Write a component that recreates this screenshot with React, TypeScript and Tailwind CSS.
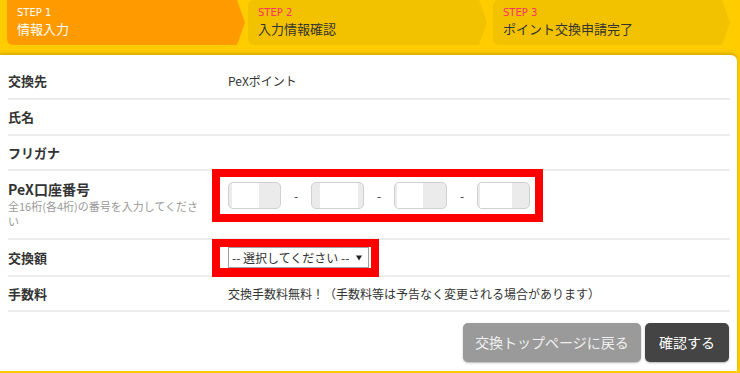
import React from "react";

const font = { fontFamily: "'Noto Sans CJK JP', 'Noto Sans', sans-serif" };

function Step({ n, title, active, w, cls }: { n: number; title: string; active?: boolean; w: string; cls?: string }) {
  return (
    <div
      className={`${w} ${cls ?? ""} h-[45px] rounded-bl-[6px] pl-[10px] flex flex-col justify-center [clip-path:polygon(0_0,calc(100%_-_8px)_0,100%_50%,calc(100%_-_8px)_100%,0_100%)] ${
        active ? "bg-[#ff9a00]" : "bg-[#f2c200]"
      }`}
    >
      <div className={`text-[10px] leading-[12px] ${active ? "text-white" : "text-[#ff3366]"}`} style={{ fontFamily: "'DejaVu Sans', sans-serif" }}>
        STEP {n}
      </div>
      <div className={`text-[13px] leading-[18px] mt-[1px] ${active ? "text-white" : "text-[#333]"}`}>{title}</div>
    </div>
  );
}

function NumBox({ white, ml }: { white: string; ml: string }) {
  return (
    <div className="w-[53px] h-[27px] rounded-[5px] border border-[#d0d0d0] bg-[#ebebeb] flex overflow-hidden">
      <div className={`${ml} ${white} h-full bg-white`} />
    </div>
  );
}

export default function App() {
  return (
    <div className="w-[740px] h-[373px] overflow-hidden bg-[#ffcc00] text-[#333]" style={font}>
      <div className="flex pl-[7px]">
        <Step n={1} title="情報入力" active w="w-[238px]" />
        <Step n={2} title="入力情報確認" w="w-[239px]" cls="ml-[3px] rounded-l-[6px]" />
        <Step n={3} title="ポイント交換申請完了" w="w-[237px]" cls="ml-[6px] rounded-l-[6px]" />
      </div>
      <div className="mt-[10px] w-[737px] h-[316px] bg-white rounded-tr-[6px] pt-[9px] pl-[8px] pr-[7px] shadow-[0_-2px_3px_rgba(180,140,0,0.5)]">
        <div className="h-[36px] border-b-2 border-[#ededed] flex items-center">
          <div className="w-[220px] text-[13px] font-bold">交換先</div>
          <div className="text-[12px]">PeXポイント</div>
        </div>
        <div className="h-[36px] border-b-2 border-[#ededed] flex items-center">
          <div className="w-[220px] text-[13px] font-bold">氏名</div>
        </div>
        <div className="h-[35px] border-b-2 border-[#ededed] flex items-center">
          <div className="w-[220px] text-[13px] font-bold">フリガナ</div>
        </div>
        <div className="h-[69px] border-b-2 border-[#ededed] flex items-start">
          <div className="w-[204px] pt-[8px]">
            <div className="text-[14px] leading-[20px] font-bold">PeX口座番号</div>
            <div className="text-[11px] leading-[15px] text-[#9a9a9a]">
              全16桁(各4桁)の番号を入力してくださ
              <br />い
            </div>
          </div>
          <div className="-mt-[2px] border-[8px] border-[#ff0000] pl-[8px] pr-[0px] py-[5px] flex items-center w-[331px] h-[53px]">
            <NumBox white="w-[27px]" ml="ml-[3px]" />
            <div className="w-[30px] text-center text-[12px]">-</div>
            <NumBox white="w-[38px]" ml="ml-[8px]" />
            <div className="w-[30px] text-center text-[12px]">-</div>
            <NumBox white="w-[26px]" ml="ml-[2px]" />
            <div className="w-[30px] text-center text-[12px]">-</div>
            <NumBox white="w-[32px]" ml="ml-[2px]" />
          </div>
        </div>
        <div className="h-[37px] border-b-2 border-[#ededed] flex items-start">
          <div className="w-[204px] h-full flex items-center text-[13px] font-bold">交換額</div>
          <div className="-mt-[1px] h-[38px] w-[167px] border-t-[8px] border-b-[9px] border-x-[8px] border-[#ff0000] pl-[8px] pr-[2px] bg-white">
            <div className="w-[141px] h-[21px] border border-[#a0a0a0] flex items-center justify-between pl-[3px] pr-[6px] text-[12px] leading-none">
              <span>-- 選択してください --</span>
              <svg width="6" height="6" viewBox="0 0 6 6">
                <path d="M0 0.5 L6 0.5 L3 5.5 Z" fill="#222" />
              </svg>
            </div>
          </div>
        </div>
        <div className="h-[35px] border-b-2 border-[#ededed] flex items-center">
          <div className="w-[220px] text-[13px] font-bold">手数料</div>
          <div className="text-[12px]">交換手数料無料！（手数料等は予告なく変更される場合があります）</div>
        </div>
        <div className="mt-[11px] flex justify-end gap-[4px] pr-[1px]">
          <div className="w-[178px] h-[39px] rounded-[5px] bg-[#9a9a9a] text-[#f0f0f0] text-[14px] flex items-center justify-center shadow-[0_1px_2px_rgba(0,0,0,0.3)]">
            交換トップページに戻る
          </div>
          <div className="w-[84px] h-[39px] rounded-[5px] bg-[#444] text-white text-[14px] flex items-center justify-center shadow-[0_1px_2px_rgba(0,0,0,0.3)]">
            確認する
          </div>
        </div>
      </div>
    </div>
  );
}
